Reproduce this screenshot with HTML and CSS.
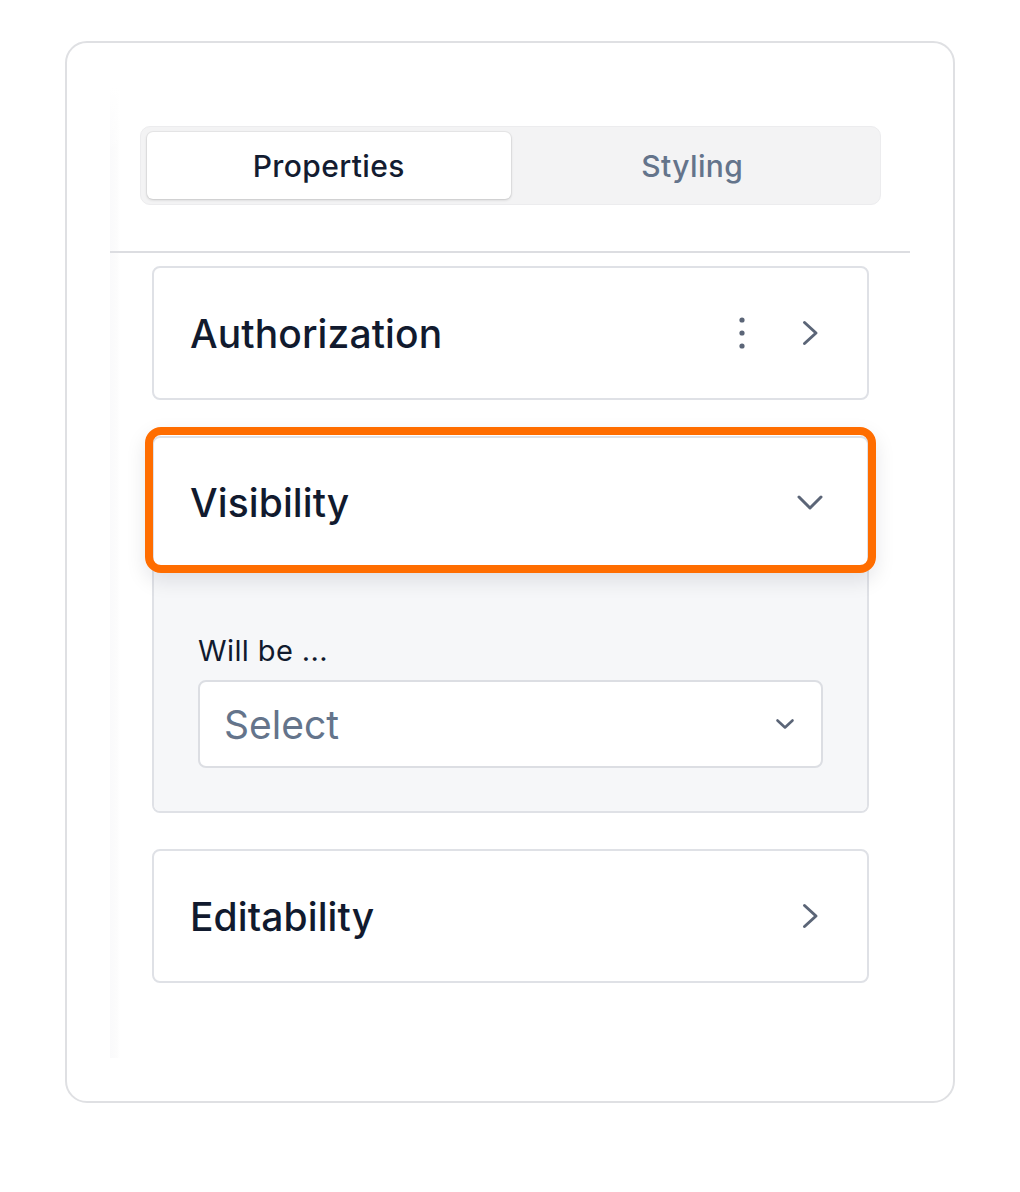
FILE: index.html
```html
<!DOCTYPE html>
<html lang="en">
<head>
<meta charset="utf-8">
<title>Properties panel</title>
<link rel="stylesheet" href="styles.css">
</head>
<body>
<div class="frame">
  <div class="panel">
    <div class="tabs-wrap">
      <div class="tabs">
        <div class="tab active">Properties</div>
        <div class="tab">Styling</div>
      </div>
    </div>
    <div class="divider"></div>
    <div class="sections">
      <section class="card">
        <div class="card-head">
          <span class="title">Authorization</span>
          <div class="actions">
            <svg class="dots" width="24" height="32" viewBox="0 0 24 32"><circle cx="12" cy="3" r="2.6"/><circle cx="12" cy="16" r="2.6"/><circle cx="12" cy="29" r="2.6"/></svg>
            <svg class="chev" width="28" height="32" viewBox="0 0 28 32"><path d="M8.5 5.5 L20 16 L8.5 26.5"/></svg>
          </div>
        </div>
      </section>
      <section class="card open">
        <div class="card-head focused">
          <span class="title">Visibility</span>
          <div class="actions">
            <svg class="chev" width="28" height="20" viewBox="0 0 28 20"><path d="M3 4 L14 15 L25 4"/></svg>
          </div>
        </div>
        <div class="card-body">
          <div class="label">Will be ...</div>
          <div class="select">
            <span class="placeholder">Select</span>
            <svg class="chev small" width="20" height="12" viewBox="0 0 20 12"><path d="M2.5 2.5 L10 9.5 L17.5 2.5"/></svg>
          </div>
        </div>
      </section>
      <section class="card">
        <div class="card-head">
          <span class="title">Editability</span>
          <div class="actions">
            <svg class="chev" width="28" height="32" viewBox="0 0 28 32"><path d="M8.5 5.5 L20 16 L8.5 26.5"/></svg>
          </div>
        </div>
      </section>
    </div>
  </div>
</div>
</body>
</html>
```

FILE: styles.css
```css
* { box-sizing: border-box; }

html, body {
  margin: 0;
  padding: 0;
  background: #ffffff;
}

body {
  font-family: Inter, "Noto Sans", "Liberation Sans", sans-serif;
  color: #111a2e;
}

.frame {
  margin: 41px 0 0 65px;
  width: 890px;
  height: 1062px;
  border: 2px solid #dfe0e3;
  border-radius: 22px;
  padding: 43px;
}

.panel {
  width: 800px;
  height: 972px;
  background:
    linear-gradient(to bottom, #ffffff 0, rgba(255, 255, 255, 0) 70px),
    linear-gradient(to right, #fafafb 0, #fcfcfc 7px, #ffffff 10px);
}

.tabs-wrap {
  padding: 40px 29px 46px 30px;
}

.tabs {
  display: grid;
  grid-template-columns: 1fr 1fr;
  height: 79px;
  padding: 5px 6px;
  background: #f3f3f4;
  border: 1px solid #ececee;
  border-radius: 10px;
}

.tab {
  display: flex;
  align-items: center;
  justify-content: center;
  font-size: 30px;
  font-weight: 500;
  letter-spacing: 0.4px;
  color: #64748b;
  border-radius: 6px;
}

.tab.active {
  background: #ffffff;
  color: #131c31;
  box-shadow: 0 1px 3px rgba(0, 0, 0, 0.16), 0 0 0 1px rgba(0, 0, 0, 0.04);
}

.divider {
  height: 2px;
  background: #dcdde1;
}

.sections {
  display: flex;
  flex-direction: column;
  gap: 36px;
  padding: 13px 41px 0 42px;
}

.card {
  border: 2px solid #dfe1e6;
  border-radius: 8px;
  background: #ffffff;
}

.card-head {
  position: relative;
  display: flex;
  align-items: center;
  justify-content: space-between;
  height: 130px;
  padding: 0 43px 0 36px;
}

.title {
  font-size: 39px;
  font-weight: 500;
  color: #111a2e;
  letter-spacing: 0.1px;
}

.actions {
  display: flex;
  align-items: center;
  gap: 42px;
}

.dots circle { fill: #5b6577; }

.chev path {
  fill: none;
  stroke: #5b6577;
  stroke-width: 3;
  stroke-linecap: round;
  stroke-linejoin: round;
}

.chev.small path { stroke-width: 2.6; }

.card-head.focused {
  height: 127px;
  padding-top: 2px;
  border-radius: 6px 6px 0 0;
}

.card-head.focused::after {
  content: "";
  position: absolute;
  top: -11px;
  left: -9px;
  right: -9px;
  bottom: -8px;
  border: 8px solid #ff6d00;
  border-radius: 16px;
  box-shadow: 0 8px 20px rgba(15, 23, 42, 0.10);
  pointer-events: none;
}

.card-body {
  background: #f6f7f9;
  padding: 69px 44px 43px;
  border-radius: 0 0 6px 6px;
}

.label {
  font-size: 29px;
  line-height: 34px;
  letter-spacing: 0.4px;
  color: #111a2e;
  margin-bottom: 12px;
}

.select {
  display: flex;
  align-items: center;
  justify-content: space-between;
  height: 88px;
  padding: 0 26px 0 24px;
  background: #ffffff;
  border: 2px solid #dcdee3;
  border-radius: 8px;
}

.placeholder {
  font-size: 39px;
  color: #64748b;
}
```
